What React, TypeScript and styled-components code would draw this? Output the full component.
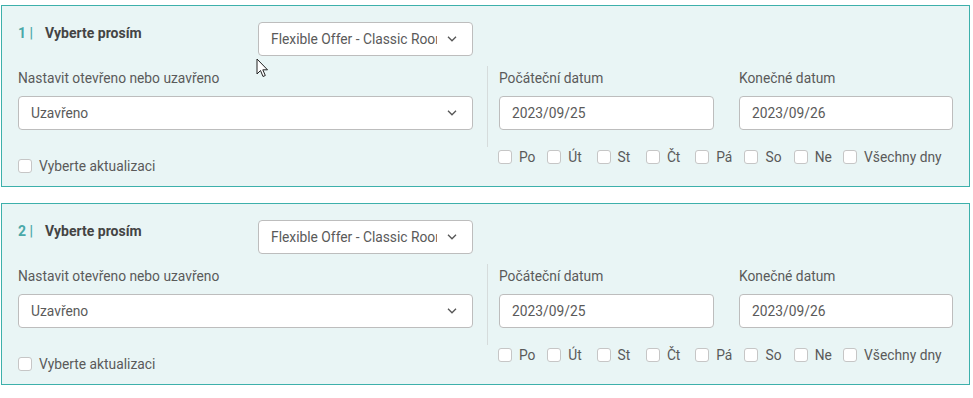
import React from "react";
import styled, { createGlobalStyle } from "styled-components";

const colors = {
  panelBg: "#e9f5f5",
  panelBorder: "#3db0ab",
  number: "#4aa8a8",
  title: "#444444",
  text: "#5a5a5a",
  inputBorder: "#bdbdbd",
  divider: "#d6dcdc",
};

const GlobalStyle = createGlobalStyle`
  body {
    margin: 0;
    background: #ffffff;
    font-family: Roboto, "Liberation Sans", Arial, sans-serif;
  }
`;

const Page = styled.div`
  position: relative;
  display: flex;
  flex-direction: column;
  gap: 16px;
  padding: 5px 0 0 1px;
  width: 969px;
`;

const Panel = styled.section`
  background: ${colors.panelBg};
  border: 1px solid ${colors.panelBorder};
  padding: 16px 15px 10px 16px;
  display: grid;
  grid-template-columns: 455px 1fr;
  column-gap: 14px;
`;

const HeaderRow = styled.div`
  display: flex;
  justify-content: space-between;
  align-items: flex-start;
  grid-column: 1 / 2;
`;

const Title = styled.div`
  display: flex;
  align-items: center;
  padding-top: 1px;
  line-height: 20px;
  font-size: 14px;
  font-weight: 700;
  color: ${colors.title};
`;

const Number = styled.span`
  color: ${colors.number};
  width: 27px;
  white-space: pre;
`;

const Column = styled.div`
  display: flex;
  flex-direction: column;
`;

const Label = styled.div`
  font-size: 13.8px;
  line-height: 20px;
  color: ${colors.text};
  margin-top: ${(props: { $top?: number }) => props.$top ?? 0}px;
  margin-bottom: 8px;
  white-space: nowrap;
`;

const Box = styled.div<{ $width?: string }>`
  box-sizing: border-box;
  width: ${(props) => props.$width ?? "100%"};
  height: 34px;
  background: #fff;
  border: 1px solid ${colors.inputBorder};
  border-radius: 4px;
  display: flex;
  align-items: center;
  padding: 0 15px 0 12px;
  font-size: 13.8px;
  color: ${colors.text};
`;

const BoxText = styled.span`
  flex: 1;
  overflow: hidden;
  white-space: nowrap;
`;

const Chevron = styled.svg`
  width: 10px;
  height: 6px;
  margin-left: 10px;
  flex-shrink: 0;
`;

const DateBlock = styled.div`
  margin-top: 10px;
  border-left: 1px solid ${colors.divider};
  padding: 2px 0 17px 11px;
  display: grid;
  grid-template-columns: 215px 214px;
  column-gap: 25px;
`;

const CheckRow = styled.div<{ $top: number; $left?: number }>`
  display: flex;
  align-items: center;
  margin-top: ${(props) => props.$top}px;
  margin-left: ${(props) => props.$left ?? 0}px;
`;

const CheckItem = styled.label<{ $width?: string }>`
  display: flex;
  align-items: center;
  gap: 7px;
  width: ${(props) => props.$width ?? "auto"};
  font-size: 13.8px;
  line-height: 20px;
  color: ${colors.text};
  white-space: nowrap;
`;

const CheckBox = styled.span`
  box-sizing: border-box;
  width: 14px;
  height: 14px;
  background: #fff;
  border: 1px solid #c6c6c6;
  border-radius: 3px;
  flex-shrink: 0;
`;

const Cursor = styled.svg`
  position: absolute;
  left: 256px;
  top: 58px;
  width: 14px;
  height: 22px;
`;

const ChevronIcon = () => (
  <Chevron viewBox="0 0 10 6">
    <polyline
      points="1,0.8 5,4.8 9,0.8"
      fill="none"
      stroke="#555"
      strokeWidth="1.3"
    />
  </Chevron>
);

const days = ["Po", "Út", "St", "Čt", "Pá", "So", "Ne"];

const Item: React.FC<{ index: number }> = ({ index }) => (
  <Panel>
    <HeaderRow>
      <Title>
        <Number>{`${index} |`}</Number>
        Vyberte prosím
      </Title>
      <Box $width="215px">
        <BoxText>Flexible Offer - Classic Room</BoxText>
        <ChevronIcon />
      </Box>
    </HeaderRow>
    <div />
    <Column>
      <Label $top={12}>Nastavit otevřeno nebo uzavřeno</Label>
      <Box>
        <BoxText>Uzavřeno</BoxText>
        <ChevronIcon />
      </Box>
      <CheckRow $top={26}>
        <CheckItem>
          <CheckBox />
          Vyberte aktualizaci
        </CheckItem>
      </CheckRow>
    </Column>
    <Column>
      <DateBlock>
        <Column>
          <Label>Počáteční datum</Label>
          <Box>2023/09/25</Box>
        </Column>
        <Column>
          <Label>Konečné datum</Label>
          <Box>2023/09/26</Box>
        </Column>
      </DateBlock>
      <CheckRow $top={0} $left={11}>
        {days.map((d) => (
          <CheckItem key={d} $width="49.3px">
            <CheckBox />
            {d}
          </CheckItem>
        ))}
        <CheckItem>
          <CheckBox />
          Všechny dny
        </CheckItem>
      </CheckRow>
    </Column>
  </Panel>
);

export default function App() {
  return (
    <>
      <GlobalStyle />
      <Page>
        <Item index={1} />
        <Item index={2} />
        <Cursor viewBox="0 0 14 22">
          <path
            d="M1 1 L1 16 L4.5 12.5 L7 18.5 L9.3 17.5 L6.8 11.8 L11.5 11.8 Z"
            fill="#fff"
            stroke="#222"
            strokeWidth="1"
            strokeLinejoin="round"
          />
        </Cursor>
      </Page>
    </>
  );
}
